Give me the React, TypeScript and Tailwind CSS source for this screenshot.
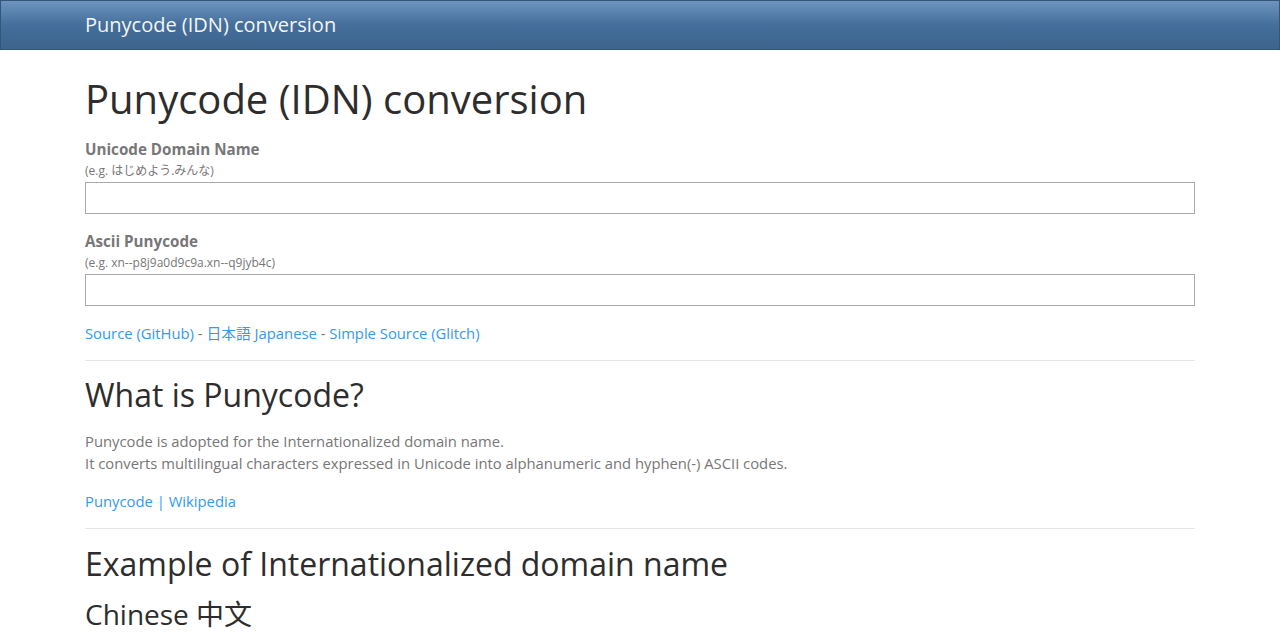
import React from "react";

export default function App() {
  return (
    <div className="min-h-[640px] bg-white text-[#777777] font-['Open_Sans',sans-serif]">
      <nav className="h-[50px] border border-[#345578] bg-[linear-gradient(#6d94bf,#446e9b_50%,#3e648d)]">
        <div className="mx-auto w-[1140px] px-[15px]">
          <div className="h-[48px] flex items-center text-[20px] text-[#f5f5f5]">
            Punycode (IDN) conversion
          </div>
        </div>
      </nav>
      <div className="mx-auto w-[1140px] px-[15px]">
        <h1 className="mt-[25px] text-[40px] leading-[48px] text-[#2d2d2d]">
          Punycode (IDN) conversion
        </h1>
        <div className="mt-[15px]">
          <label className="block text-[15.2px] leading-[22px] font-bold">Unicode Domain Name</label>
          <div className="text-[12px] leading-[22px] font-['Open_Sans','Noto_Sans_CJK_JP',sans-serif]">(e.g. はじめよう.みんな)</div>
          <input className="block w-full h-[32px] border border-[#aaaaaa]" />
        </div>
        <div className="mt-[16px]">
          <label className="block text-[15.2px] leading-[22px] font-bold">Ascii Punycode</label>
          <div className="text-[12px] leading-[22px]">(e.g. xn--p8j9a0d9c9a.xn--q9jyb4c)</div>
          <input className="block w-full h-[32px] border border-[#aaaaaa]" />
        </div>
        <div className="mt-[16px] text-[14.8px] leading-[22px] font-['Open_Sans','Noto_Sans_CJK_JP',sans-serif]">
          <a className="text-[#3399f3]">Source (GitHub)</a> - <a className="text-[#3399f3]">日本語 Japanese</a> - <a className="text-[#3399f3]">Simple Source (Glitch)</a>
        </div>
        <hr className="mt-[16px] border-t border-[#e5e5e5]" />
        <h2 className="mt-[14px] text-[32px] leading-[40px] text-[#2d2d2d]">What is Punycode?</h2>
        <p className="mt-[15px] text-[14.8px] leading-[22px]">
          Punycode is adopted for the Internationalized domain name.
          <br />
          It converts multilingual characters expressed in Unicode into alphanumeric and hyphen(-) ASCII codes.
        </p>
        <p className="mt-[16px] text-[14.8px] leading-[22px]">
          <a className="text-[#3399f3]">Punycode | Wikipedia</a>
        </p>
        <hr className="mt-[16px] border-t border-[#e5e5e5]" />
        <h2 className="mt-[15px] text-[32px] leading-[40px] text-[#2d2d2d]">Example of Internationalized domain name</h2>
        <h3 className="mt-[13px] text-[28px] leading-[34px] text-[#2d2d2d] font-['Open_Sans','Noto_Sans_CJK_SC',sans-serif]">Chinese 中文</h3>
      </div>
    </div>
  );
}
